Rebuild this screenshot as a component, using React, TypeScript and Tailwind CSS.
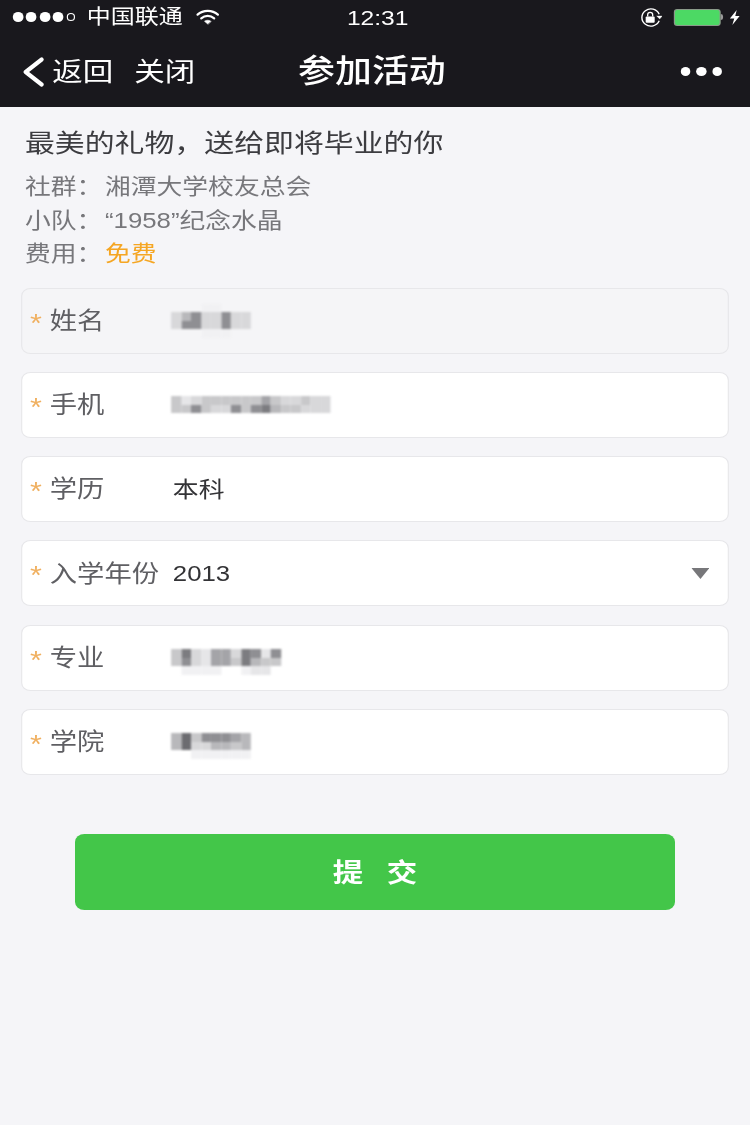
const cjk = "font-['Liberation_Sans','Noto_Sans_CJK_SC',sans-serif]";

type Field = {
  label: string;
  value?: string;
  mosaic?: string[];
  disabled?: boolean;
  select?: boolean;
};

// each digit is one mosaic cell: 0 = blank, 9 = darkest
const fields: Field[] = [
  { label: "姓名", disabled: true, mosaic: ["00011000", "35733733", "37733733", "00011100"] },
  { label: "手机", mosaic: ["4234444446433433", "4474337478544333"] },
  { label: "学历", value: "本科" },
  { label: "入学年份", value: "2013", select: true },
  { label: "专业", mosaic: ["00000000000", "48326638727", "47326648544", "01111001220"] },
  { label: "学院", mosaic: ["00000000", "59477765", "59335545", "00111111"] },
];

const shades = ["transparent", "#f1f1f3", "#e6e6e8", "#d8d8da", "#c8c8ca", "#b8b8bb", "#a4a4a8", "#8f8f93", "#7c7c80", "#6c6c70"];

function Mosaic({ rows }: { rows: string[] }) {
  return (
    <div className="flex flex-col blur-[1px]">
      {rows.map((row, i) => (
        <div key={i} className="flex h-[8.5px]">
          {row.split("").map((c, j) => (
            <div key={j} className="h-full w-[8.53px]" style={{ background: shades[Number(c)] }} />
          ))}
        </div>
      ))}
    </div>
  );
}

function StatusBar() {
  return (
    <div className="grid h-[36px] grid-cols-3 items-center pb-[2px] pl-[11px] pr-[8px] text-white">
      <div className="flex items-center">
        <div className="flex items-center gap-[2.6px]">
          <span className="h-[10px] w-[8.8px] rounded-full bg-white" />
          <span className="h-[10px] w-[8.8px] rounded-full bg-white" />
          <span className="h-[10px] w-[8.8px] rounded-full bg-white" />
          <span className="h-[10px] w-[8.8px] rounded-full bg-white" />
          <span className="h-[8px] w-[7px] rounded-full border border-white" />
        </div>
        <span className={`${cjk} ml-[10.5px] whitespace-nowrap text-[20.5px] leading-none`}>中国联通</span>
        <svg className="ml-[11px] shrink-0" width="20.5" height="16" viewBox="0 0 26 17" preserveAspectRatio="none" fill="none" stroke="white" strokeLinecap="round">
          <path d="M2 6 C8 0.5 18 0.5 24 6" strokeWidth="2.4" />
          <path d="M6 10 C10 6.5 16 6.5 20 10" strokeWidth="2.4" />
          <path d="M13 16 L9.5 13 C11.5 11.5 14.5 11.5 16.5 13 Z" fill="white" strokeWidth="0.6" />
        </svg>
      </div>
      <div className="pl-[78px] font-['Liberation_Sans',sans-serif] text-[21px] leading-none whitespace-nowrap">12:31</div>
      <div className="flex items-center justify-end">
        <svg width="20.5" height="19" viewBox="0 0 24 20" preserveAspectRatio="none" fill="none" stroke="white">
          <path d="M20.5 6.5 A9 9 0 1 0 20.5 13.5" strokeWidth="1.4" />
          <path d="M18 8.5 L21 11.5 L23.5 8.5 Z" fill="white" strokeWidth="0.4" />
          <rect x="7" y="9" width="9" height="6.5" rx="1" fill="white" strokeWidth="0" />
          <path d="M9 9 V7 A2.5 2.5 0 0 1 14 7 V9" strokeWidth="1.3" />
        </svg>
        <div className="ml-[9.5px] flex items-center">
          <div className="h-[17px] w-[40px] rounded-[3px] border border-[#8a9a8a] bg-[#4cd964]" />
          <div className="h-[6px] w-[2px] rounded-r-[2px] bg-[#9a9a9a]" />
        </div>
        <svg className="ml-[5.5px]" width="10" height="15" viewBox="0 0 12 16" preserveAspectRatio="none" fill="white">
          <path d="M8 0 L1 9 H5.5 L3.5 16 L11 6.5 H6.5 Z" />
        </svg>
      </div>
    </div>
  );
}

function NavBar() {
  return (
    <div className="grid h-[71px] grid-cols-[1fr_auto_1fr] items-center pl-[18.8px] pr-[24px] text-white">
      <div className={`${cjk} flex items-center text-[26px] leading-none`}>
        <svg width="19" height="30" viewBox="0 0 23 30" preserveAspectRatio="none" fill="none" stroke="white" strokeWidth="4.2" strokeLinecap="round" strokeLinejoin="round">
          <path d="M20 2.5 L3.5 15 L20 27.5" />
        </svg>
        <span className="ml-[6.8px]">返回</span>
        <span className="ml-[18px]">关闭</span>
      </div>
      <div className={`${cjk} text-[31.5px] font-medium leading-none`}>参加活动</div>
      <div className="flex items-center justify-end gap-[5px]">
        <span className="h-[9.5px] w-[8.5px] rounded-full bg-white" />
        <span className="h-[9.5px] w-[8.5px] rounded-full bg-white" />
        <span className="h-[9.5px] w-[8.5px] rounded-full bg-white" />
      </div>
    </div>
  );
}

function FormField({ field }: { field: Field }) {
  return (
    <div
      className={`flex h-[66px] items-center rounded-[8px] border border-[#e7e7ea] pl-[6.5px] pr-[16px] ${
        field.disabled ? "bg-[#f5f5f7]" : "bg-white"
      }`}
    >
      <span className="w-[17px] pt-[4px] font-['Liberation_Sans',sans-serif] text-[26px] leading-none text-[#f0b060]">*</span>
      <span className={`${cjk} w-[103.5px] whitespace-nowrap pt-[2px] text-[23.3px] leading-none text-[#5f5f63]`}>
        {field.label}
      </span>
      {field.mosaic && <Mosaic rows={field.mosaic} />}
      {field.value && (
        <span className={`${cjk} ml-[1.5px] pt-[2px] text-[22px] leading-none text-[#333336]`}>{field.value}</span>
      )}
      {field.select && (
        <svg className="ml-auto" width="15.4" height="11" viewBox="0 0 18 11" preserveAspectRatio="none" fill="#77777a">
          <path d="M0 0 H18 L9 11 Z" />
        </svg>
      )}
    </div>
  );
}

export default function App() {
  return (
    // the reference is a 640px wide phone capture stretched to 750px
    <div className="flex h-[1125px] w-[640px] origin-top-left scale-x-[1.171875] flex-col overflow-hidden bg-[#f5f5f8]">
      <header className="h-[107px] shrink-0 bg-[#19181d]">
        <StatusBar />
        <NavBar />
      </header>

      <div className={`${cjk} pl-[21.3px] pt-[21px]`}>
        <h1 className="text-[25.5px] font-normal leading-[30px] text-[#3c3c40]">
          最美的礼物，送给即将毕业的你
        </h1>
        <div className="mt-[12px] flex flex-col text-[22px] leading-[33.5px] text-[#77777b]">
          <div className="flex">
            <span className="w-[68.3px]">社群：</span>
            <span>湘潭大学校友总会</span>
          </div>
          <div className="flex">
            <span className="w-[68.3px]">小队：</span>
            <span>“1958”纪念水晶</span>
          </div>
          <div className="flex">
            <span className="w-[68.3px]">费用：</span>
            <span className="text-[#f5a623]">免费</span>
          </div>
        </div>
      </div>

      <div className="mt-[17px] flex flex-col gap-[18.3px] px-[18px]">
        {fields.map((field) => (
          <FormField key={field.label} field={field} />
        ))}
      </div>

      <div className="mt-[59.5px] px-[64px]">
        <button className={`${cjk} h-[76px] w-full rounded-[8px] bg-[#43c649] pl-[20px] pt-[2px] text-[26px] font-bold tracking-[20px] text-white`}>
          提交
        </button>
      </div>
    </div>
  );
}
